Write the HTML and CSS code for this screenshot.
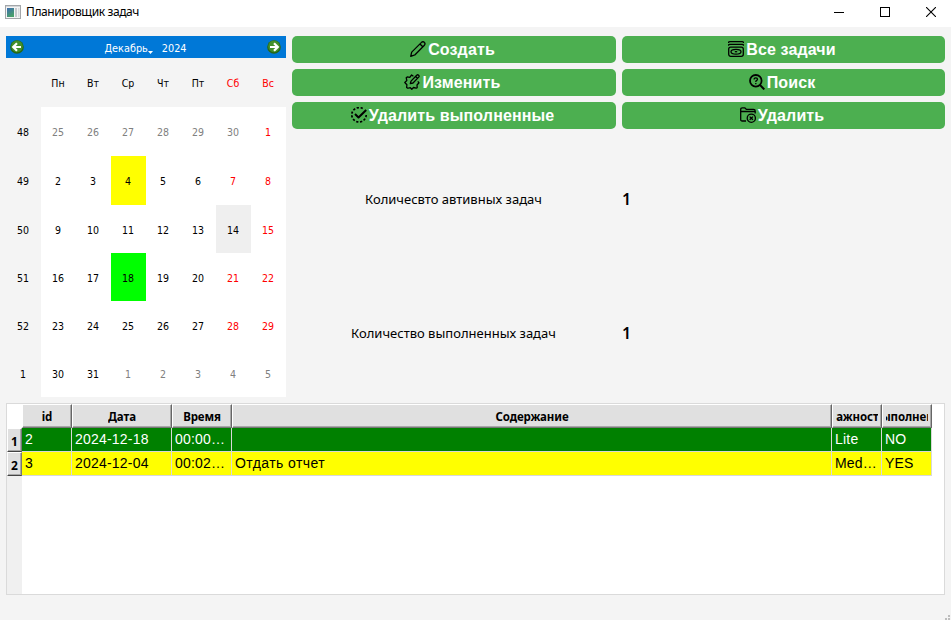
FILE: index.html
```
<!DOCTYPE html>
<html lang="ru">
<head>
<meta charset="utf-8">
<title>Планировщик задач</title>
<link rel="stylesheet" href="styles.css">
</head>
<body>
<header class="titlebar">
  <svg class="app-icon" width="16" height="14" viewBox="0 0 16 14"><defs><linearGradient id="pane" x1="0" y1="0" x2="0.5" y2="1"><stop offset="0" stop-color="#3d6cb0"/><stop offset="1" stop-color="#49a06b"/></linearGradient></defs><rect x=".5" y=".5" width="15" height="13" fill="#f4f4f4" stroke="#a3a6a9"/><path d="M1 1.5h14" stroke="#d2d5d8"/><rect x="2" y="3" width="7" height="9" fill="url(#pane)"/><rect x="10" y="3" width="2" height="9" fill="#c5c9cd"/><rect x="13" y="3" width="1.5" height="9" fill="#d8dbde"/></svg>
  <h1 class="title">Планировщик задач</h1>
  <div class="controls">
    <svg width="10" height="10" viewBox="0 0 10 10"><path d="M0 5.5h10" stroke="#000"/></svg>
    <svg width="10" height="10" viewBox="0 0 10 10"><rect x=".5" y=".5" width="9" height="9" fill="none" stroke="#000"/></svg>
    <svg width="10" height="10" viewBox="0 0 10 10"><path d="M0 0l10 10M10 0L0 10" stroke="#000" stroke-width="1.1"/></svg>
  </div>
</header>
<main class="window">
  <div class="top">
    <section class="calendar">
      <div class="nav">
        <svg width="14" height="14" viewBox="0 0 14 14"><circle cx="7" cy="7" r="6.8" fill="#286714"/><circle cx="7" cy="6.4" r="5.8" fill="#43902a"/><path d="M11 7H3.8M7 3.2L3.2 7 7 10.8" fill="none" stroke="#fff" stroke-width="2.2"/></svg>
        <div class="period"><span class="month">Декабрь</span><svg class="drop" width="5" height="3" viewBox="0 0 5 3"><path d="M0 0h5L2.5 3z" fill="#fff"/></svg><span>2024</span></div>
        <svg width="14" height="14" viewBox="0 0 14 14"><circle cx="7" cy="7" r="6.8" fill="#286714"/><circle cx="7" cy="6.4" r="5.8" fill="#43902a"/><path d="M3 7h7.2M7 3.2L10.8 7 7 10.8" fill="none" stroke="#fff" stroke-width="2.2"/></svg>
      </div>
      <div class="days">
        <span class="side"></span><span class="side">Пн</span><span class="side">Вт</span><span class="side">Ср</span><span class="side">Чт</span><span class="side">Пт</span><span class="side red">Сб</span><span class="side red">Вс</span>
        <span class="side">48</span><span class="dim">25</span><span class="dim">26</span><span class="dim">27</span><span class="dim">28</span><span class="dim">29</span><span class="dim">30</span><span class="red">1</span>
        <span class="side">49</span><span>2</span><span>3</span><span class="yellow">4</span><span>5</span><span>6</span><span class="red">7</span><span class="red">8</span>
        <span class="side">50</span><span>9</span><span>10</span><span>11</span><span>12</span><span>13</span><span class="today">14</span><span class="red">15</span>
        <span class="side">51</span><span>16</span><span>17</span><span class="lime">18</span><span>19</span><span>20</span><span class="red">21</span><span class="red">22</span>
        <span class="side">52</span><span>23</span><span>24</span><span>25</span><span>26</span><span>27</span><span class="red">28</span><span class="red">29</span>
        <span class="side">1</span><span>30</span><span>31</span><span class="dim">1</span><span class="dim">2</span><span class="dim">3</span><span class="dim">4</span><span class="dim">5</span>
      </div>
    </section>
    <section class="panel">
      <div class="actions">
        <button class="btn"><svg class="icon" viewBox="0 0 16 16"><path d="M.7 15.3l1-4.2L11.5 1.4a1.9 1.9 0 0 1 2.9 0 1.9 1.9 0 0 1 0 2.8L4.8 14z M10 3l3 3M1 15l3.5-1"/></svg>Создать</button>
        <button class="btn"><svg class="icon" viewBox="0 0 16 16"><path d="M4.6 14.1h-1l-1-.6.3-2.8L.8 8.5l2-2-.6-2.8 1-.8 2.6.4L7.6 1l1.8 1.3M13.8 7.3l1.2 1.5-2 2.2.2 2.6-1 .6-2.7-.7L7.8 15.3l-1.5-1.6-1.7.4"/><path d="M6.3 9.7l.7-2.6L12.7 1.3a1.3 1.3 0 0 1 2 1.8L9 9z M11.6 2.5l1.8 1.8"/></svg>Изменить</button>
        <button class="btn"><svg class="icon" viewBox="0 0 16 16"><path d="M11.7 1.6A7.2 7.2 0 1 0 15.2 8" stroke-width="1.7" stroke-dasharray="2.3 1.6"/><path d="M4 7l3.5 3.5L15.2 3" stroke-width="2"/></svg>Удалить выполненные</button>
        <button class="btn"><svg class="icon" viewBox="0 0 16 16"><path d="M.4 2q0-1.3 1.4-1.3h12.4q1.4 0 1.4 1.3M.4 4.7q0-1.3 1.4-1.3h12.4q1.4 0 1.4 1.3"/><rect x=".7" y="6.2" width="14.6" height="9.1" rx="2"/><ellipse cx="8" cy="10.7" rx="5" ry="2.4"/><path d="M6.8 10.7h2.4"/></svg>Все задачи</button>
        <button class="btn"><svg class="icon" viewBox="0 0 16 16"><circle cx="6.8" cy="6.8" r="5.8" stroke-width="1.8"/><path d="M10.8 10.8l4.5 4.6" stroke-width="2"/><path d="M5.1 5.5q0-1.7 1.7-1.7t1.7 1.5q0 .9-1.6 1.7v.9M6.8 9.1v1.2" stroke-width="1.3"/></svg>Поиск</button>
        <button class="btn"><svg class="icon" viewBox="0 0 16 16"><path d="M6 14H2.3Q.7 14 .7 12.4V2.4Q.7.8 2.3.8h2.4l1.8 1.6h7q1.7 0 1.7 1.6v2.5M.7 4.5h14.5"/><circle cx="11.3" cy="11.2" r="4.1"/><path d="M9.7 9.6l3.2 3.2M12.9 9.6l-3.2 3.2"/></svg>Удалить</button>
      </div>
      <div class="stats">
        <span class="label">Количесвто автивных задач</span><b class="count">1</b>
        <span class="label">Количество выполненных задач</span><b class="count">1</b>
      </div>
    </section>
  </div>
  <section class="table-frame">
    <div class="tasks">
      <div class="corner"></div><div class="head"><span>id</span></div><div class="head"><span>Дата</span></div><div class="head"><span>Время</span></div><div class="head"><span>Содержание</span></div><div class="head"><span>Важность</span></div><div class="head"><span>Выполнено</span></div>
      <div class="head num">1</div><div class="cell done">2</div><div class="cell done">2024-12-18</div><div class="cell done">00:00…</div><div class="cell done"></div><div class="cell done">Lite</div><div class="cell done">NO</div>
      <div class="head num">2</div><div class="cell">3</div><div class="cell">2024-12-04</div><div class="cell">00:02…</div><div class="cell content">Отдать отчет</div><div class="cell">Med…</div><div class="cell">YES</div>
    </div>
  </section>
  <footer class="status"><svg width="6" height="6" viewBox="0 0 6 6"><path d="M3 1h2v2H3zM0 4h2v2H0zM3 4h2v2H3z" fill="#bdbdbd"/></svg></footer>
</main>
</body>
</html>
```
FILE: styles.css
```
* { box-sizing: border-box; }
body {
  margin: 0;
  width: 951px;
  height: 620px;
  overflow: hidden;
  display: flex;
  flex-direction: column;
  background: #f4f4f4;
  color: #000;
  font-family: "Noto Sans", sans-serif;
}
svg { display: block; flex: none; }

.titlebar {
  height: 27px;
  padding: 0 15px 4px 5px;
  display: flex;
  align-items: center;
  background: #fff;
}
.title {
  margin: 1px 0 0 5px;
  font-size: 12px;
  letter-spacing: -0.4px;
  font-weight: 400;
  line-height: 16px;
}
.controls { margin-left: auto; display: flex; gap: 36px; }

.window {
  flex: 1;
  padding: 9px 0 0 6px;
  display: flex;
  flex-direction: column;
}
.top { display: flex; gap: 6px; height: 361px; }

.calendar {
  width: 280px;
  font-family: "DejaVu Sans Condensed", "DejaVu Sans", sans-serif;
  font-stretch: condensed;
  font-size: 10.5px;
}
.nav {
  height: 22px;
  padding: 0 5px 1px 4px;
  display: flex;
  align-items: center;
  justify-content: space-between;
  background: #0078d7;
  color: #fff;
}
.period { display: flex; align-items: center; padding-top: 3px; font-size: 10.8px; }
.drop { margin: 9px 9px 0 0; }
.days {
  display: grid;
  grid-template-columns: repeat(8, 35px);
  grid-template-rows: repeat(3, 49px) repeat(4, 48px);
}
.days span {
  display: flex;
  align-items: center;
  justify-content: center;
  padding: 1px 1px 0 0;
  background: #fff;
}
.days .side { background: #f4f4f4; }
.days .red { color: #f00; }
.days .dim { color: #808080; }
.days .yellow { background: #ff0; }
.days .lime { background: #0f0; }
.days .today { background: #efefef; }

.panel { width: 653px; }
.actions {
  display: grid;
  grid-template-columns: 324px 323px;
  grid-template-rows: repeat(3, 27px);
  grid-auto-flow: column;
  gap: 6px;
}
.btn {
  display: flex;
  align-items: center;
  justify-content: center;
  gap: 2px;
  padding: 0 3px 0 0;
  border: 0;
  border-radius: 5px;
  background: #4caf50;
  color: #fff;
  font: bold 16px/20px "Liberation Sans", sans-serif;
  letter-spacing: 0.13px;
}
.icon {
  width: 16px;
  height: 16px;
  margin-top: -1px;
  fill: none;
  stroke: #000;
  stroke-width: 1.3;
  stroke-linejoin: round;
}
.stats {
  margin-top: 3px;
  display: grid;
  grid-template-columns: 324px 323px;
  grid-template-rows: 134px 134px;
  column-gap: 6px;
  align-items: center;
}
.label { padding-right: 1px; text-align: center; font-size: 13px; }
.count { font: 600 16px/20px "Noto Sans", sans-serif; }

.table-frame {
  margin-top: 6px;
  width: 939px;
  height: 192px;
  border: 1px solid #dadada;
  background: linear-gradient(to right, #f0f0f0 15px, #fff 15px);
}
.tasks {
  width: 925px;
  display: grid;
  grid-template-columns: 15px 50px 100px 60px 600px 50px 50px;
  grid-template-rows: 24px 24px 24px;
}
.corner { background: #fff; }
.head {
  min-width: 0;
  overflow: hidden;
  display: flex;
  align-items: center;
  justify-content: center;
  padding: 1px 3px 0;
  background: #e0e0e0;
  border: 1px solid;
  border-color: #fff #666 #777 #fff;
  box-shadow: inset -1px -1px #a8a8a8;
  font-size: 11.5px;
  font-weight: 700;
  letter-spacing: -0.1px;
  white-space: nowrap;
}
.head span {
  min-width: 0;
  overflow: hidden;
  display: flex;
  justify-content: center;
}
.num { padding: 2px 0 0; border-color: #fff #777 #444 #fff; font-size: 12px; }
.cell {
  min-width: 0;
  overflow: hidden;
  padding-left: 3px;
  border-right: 1px solid #d8d8d8;
  border-bottom: 1px solid #d8d8d8;
  background: #ff0;
  font: 14px/23px "Liberation Sans", sans-serif;
  letter-spacing: 0.2px;
  white-space: nowrap;
}
.content { letter-spacing: 0.42px; }
.done { background: #008000; color: #fff; }
.status { flex: 1; display: flex; justify-content: flex-end; align-items: flex-end; }
```
